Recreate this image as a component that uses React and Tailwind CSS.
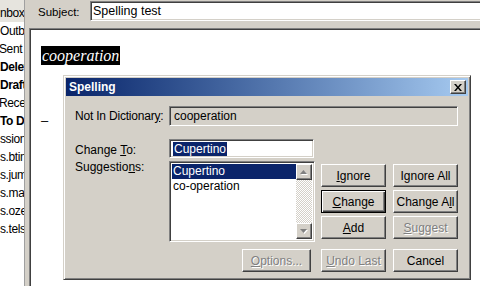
import React from 'react';

const raised = 'bg-[#d4d0c8] border border-t-white border-l-white border-r-[#404040] border-b-[#404040] shadow-[inset_-1px_-1px_#808080]';
const sunken = 'border border-t-[#808080] border-l-[#808080] border-r-white border-b-white shadow-[inset_1px_1px_#404040,inset_-1px_-1px_#d4d0c8]';
const grayText = 'text-[#808080] [text-shadow:1px_1px_0_#fff]';

const folders = [
  { name: 'Inbox', ml: '-ml-[3px]' },
  { name: 'Outbox', ml: 'ml-0' },
  { name: 'Sent Items', ml: '-ml-[1px]' },
  { name: 'Deleted Items', ml: 'ml-0', bold: true },
  { name: 'Drafts', ml: 'ml-0', bold: true },
  { name: 'Received', ml: '-ml-[1px]' },
  { name: 'To Do', ml: 'ml-0', bold: true },
  { name: 'ssion', ml: 'ml-0' },
  { name: 's.btinternet', ml: 'ml-0' },
  { name: 's.jump', ml: 'ml-0' },
  { name: 's.mac', ml: 'ml-0' },
  { name: 's.ozemail', ml: 'ml-0' },
  { name: 's.telstra', ml: 'ml-0' },
];

function Btn({ children, disabled, isDefault, w = 'w-[65px]' }) {
  const frame = isDefault
    ? 'bg-[#d4d0c8] border border-black shadow-[inset_1px_1px_#fff,inset_-1px_-1px_#404040,inset_-2px_-2px_#808080]'
    : raised;
  return (
    <div className={`${frame} ${w} h-[23px] flex items-center justify-center text-[12px] ${disabled ? grayText : 'text-black'}`}>
      {children}
    </div>
  );
}

function Arrow({ up }) {
  return (
    <div className={`${raised} w-[16px] h-[16px] flex items-center justify-center`}>
      <svg width="8" height="5" viewBox="0 0 8 5">
        {up ? (
          <>
            <path d="M1 5 L4.5 1 L8 5 Z" fill="#fff" />
            <path d="M0 4 L3.5 0 L7 4 Z" fill="#808080" />
          </>
        ) : (
          <>
            <path d="M1 1 L4.5 5 L8 1 Z" fill="#fff" />
            <path d="M0 0 L3.5 4 L7 0 Z" fill="#808080" />
          </>
        )}
      </svg>
    </div>
  );
}

export default function App() {
  return (
    <div className="w-[480px] h-[286px] relative overflow-hidden bg-white flex font-['Liberation_Sans',Arial,sans-serif] text-black">
      {/* folder list */}
      <div className="w-[24px] shrink-0 overflow-hidden text-[12px] tracking-[-0.4px]">
        {folders.map((f, i) => (
          <div
            key={f.name}
            className={`whitespace-nowrap ${i === 0 ? 'h-[22px] pt-[4px] leading-[18px] bg-[#e6e4de]' : 'h-[18px] leading-[18px]'} ${f.bold ? 'font-bold' : ''}`}
          >
            <span className={`inline-block ${f.ml}`}>{f.name}</span>
          </div>
        ))}
      </div>

      {/* message pane */}
      <div className="flex-1 flex flex-col bg-[#d4d0c8] border-l border-[#a0a0a0]">
        <div className="h-[28px] shrink-0 flex items-start">
          <span className="text-[11.5px] ml-[13px] mt-[4px] w-[52px]">Subject:</span>
          <div className={`${sunken} flex-1 -mr-[4px] mt-[1px] h-[20px] bg-white flex items-center pl-[2px] text-[12.5px]`}>
            Spelling test
          </div>
        </div>
        <div className="flex-1 ml-[4px] bg-white border-t border-l border-[#808080] shadow-[inset_1px_1px_#404040] pl-[11px] pt-[15px]">
          <span className="bg-black text-white italic font-['Liberation_Serif',serif] text-[16px] leading-[19px] px-[1px] inline-block">
            cooperation
          </span>
          <div className="mt-[45px] text-[13px] leading-[16px]">–</div>
        </div>
      </div>

      {/* spelling dialog */}
      <div className="absolute left-[63px] top-[75px] w-[408px] h-[205px] bg-[#d4d0c8] border border-[#d4d0c8] border-r-[#404040] border-b-[#404040] shadow-[inset_1px_1px_#fff,inset_-1px_-1px_#808080] p-[2px] text-[12px]">
        <div className="h-[18px] bg-linear-to-r from-[#0a246a] to-[#a6caf0] flex items-center justify-between">
          <span className="text-white font-bold text-[12px] pl-[3px]">Spelling</span>
          <div className={`${raised} w-[16px] h-[14px] mr-[2px] flex items-center justify-center`}>
            <svg width="8" height="7" viewBox="0 0 8 7">
              <path d="M0 0 L2 0 L4 2.5 L6 0 L8 0 L5 3.5 L8 7 L6 7 L4 4.5 L2 7 L0 7 L3 3.5 Z" fill="#000" />
            </svg>
          </div>
        </div>

        <div className="pl-[9px] pt-[10px]">
          <div className="flex items-center h-[20px]">
            <span className="w-[94px] tracking-[-0.2px]">Not In Dictionar<u>y</u>:</span>
            <div className={`${sunken} w-[289px] h-[20px] bg-[#d4d0c8] flex items-center pl-[4px]`}>cooperation</div>
          </div>

          <div className="flex mt-[13px]">
            <div className="w-[94px] flex flex-col">
              <span className="h-[19px] leading-[19px] mt-[2px]">Change <u>T</u>o:</span>
              <span className="leading-[14px]">Suggestio<u>n</u>s:</span>
            </div>
            <div className="w-[146px] flex flex-col">
              <div className={`${sunken} w-[145px] h-[19px] bg-white flex items-center pl-[3px]`}>
                <span className="bg-[#0a246a] text-white leading-[14px] px-[1px]">Cupertino</span>
              </div>
              <div className={`${sunken} mt-[3px] h-[81px] bg-white flex p-[2px]`}>
                <div className="flex-1 flex flex-col">
                  <div className="bg-[#0a246a] text-white h-[15px] leading-[15px] pl-[1px]">Cupertino</div>
                  <div className="h-[15px] leading-[15px] pl-[1px]">co-operation</div>
                </div>
                <div className="w-[16px] flex flex-col">
                  <Arrow up />
                  <div className="flex-1 bg-[repeating-conic-gradient(#d4d0c8_0_25%,#ffffff_0_50%)] bg-[length:2px_2px]" />
                  <Arrow />
                </div>
              </div>
            </div>
            <div className="ml-[6px] mt-[25px] grid grid-cols-[65px_65px] gap-x-[7px] gap-y-[3px] h-fit">
              <Btn><u>I</u>gnore</Btn>
              <Btn>I<u>g</u>nore All</Btn>
              <Btn isDefault><u>C</u>hange</Btn>
              <Btn>Change A<u>l</u>l</Btn>
              <Btn><u>A</u>dd</Btn>
              <Btn disabled><u>S</u>uggest</Btn>
            </div>
          </div>

          <div className="flex mt-[7px] ml-[167px]">
            <Btn disabled w="w-[69px]"><u>O</u>ptions...</Btn>
            <div className="ml-[10px] flex gap-[7px]">
              <Btn disabled><u>U</u>ndo Last</Btn>
              <Btn>Cancel</Btn>
            </div>
          </div>
        </div>
      </div>
    </div>
  );
}
